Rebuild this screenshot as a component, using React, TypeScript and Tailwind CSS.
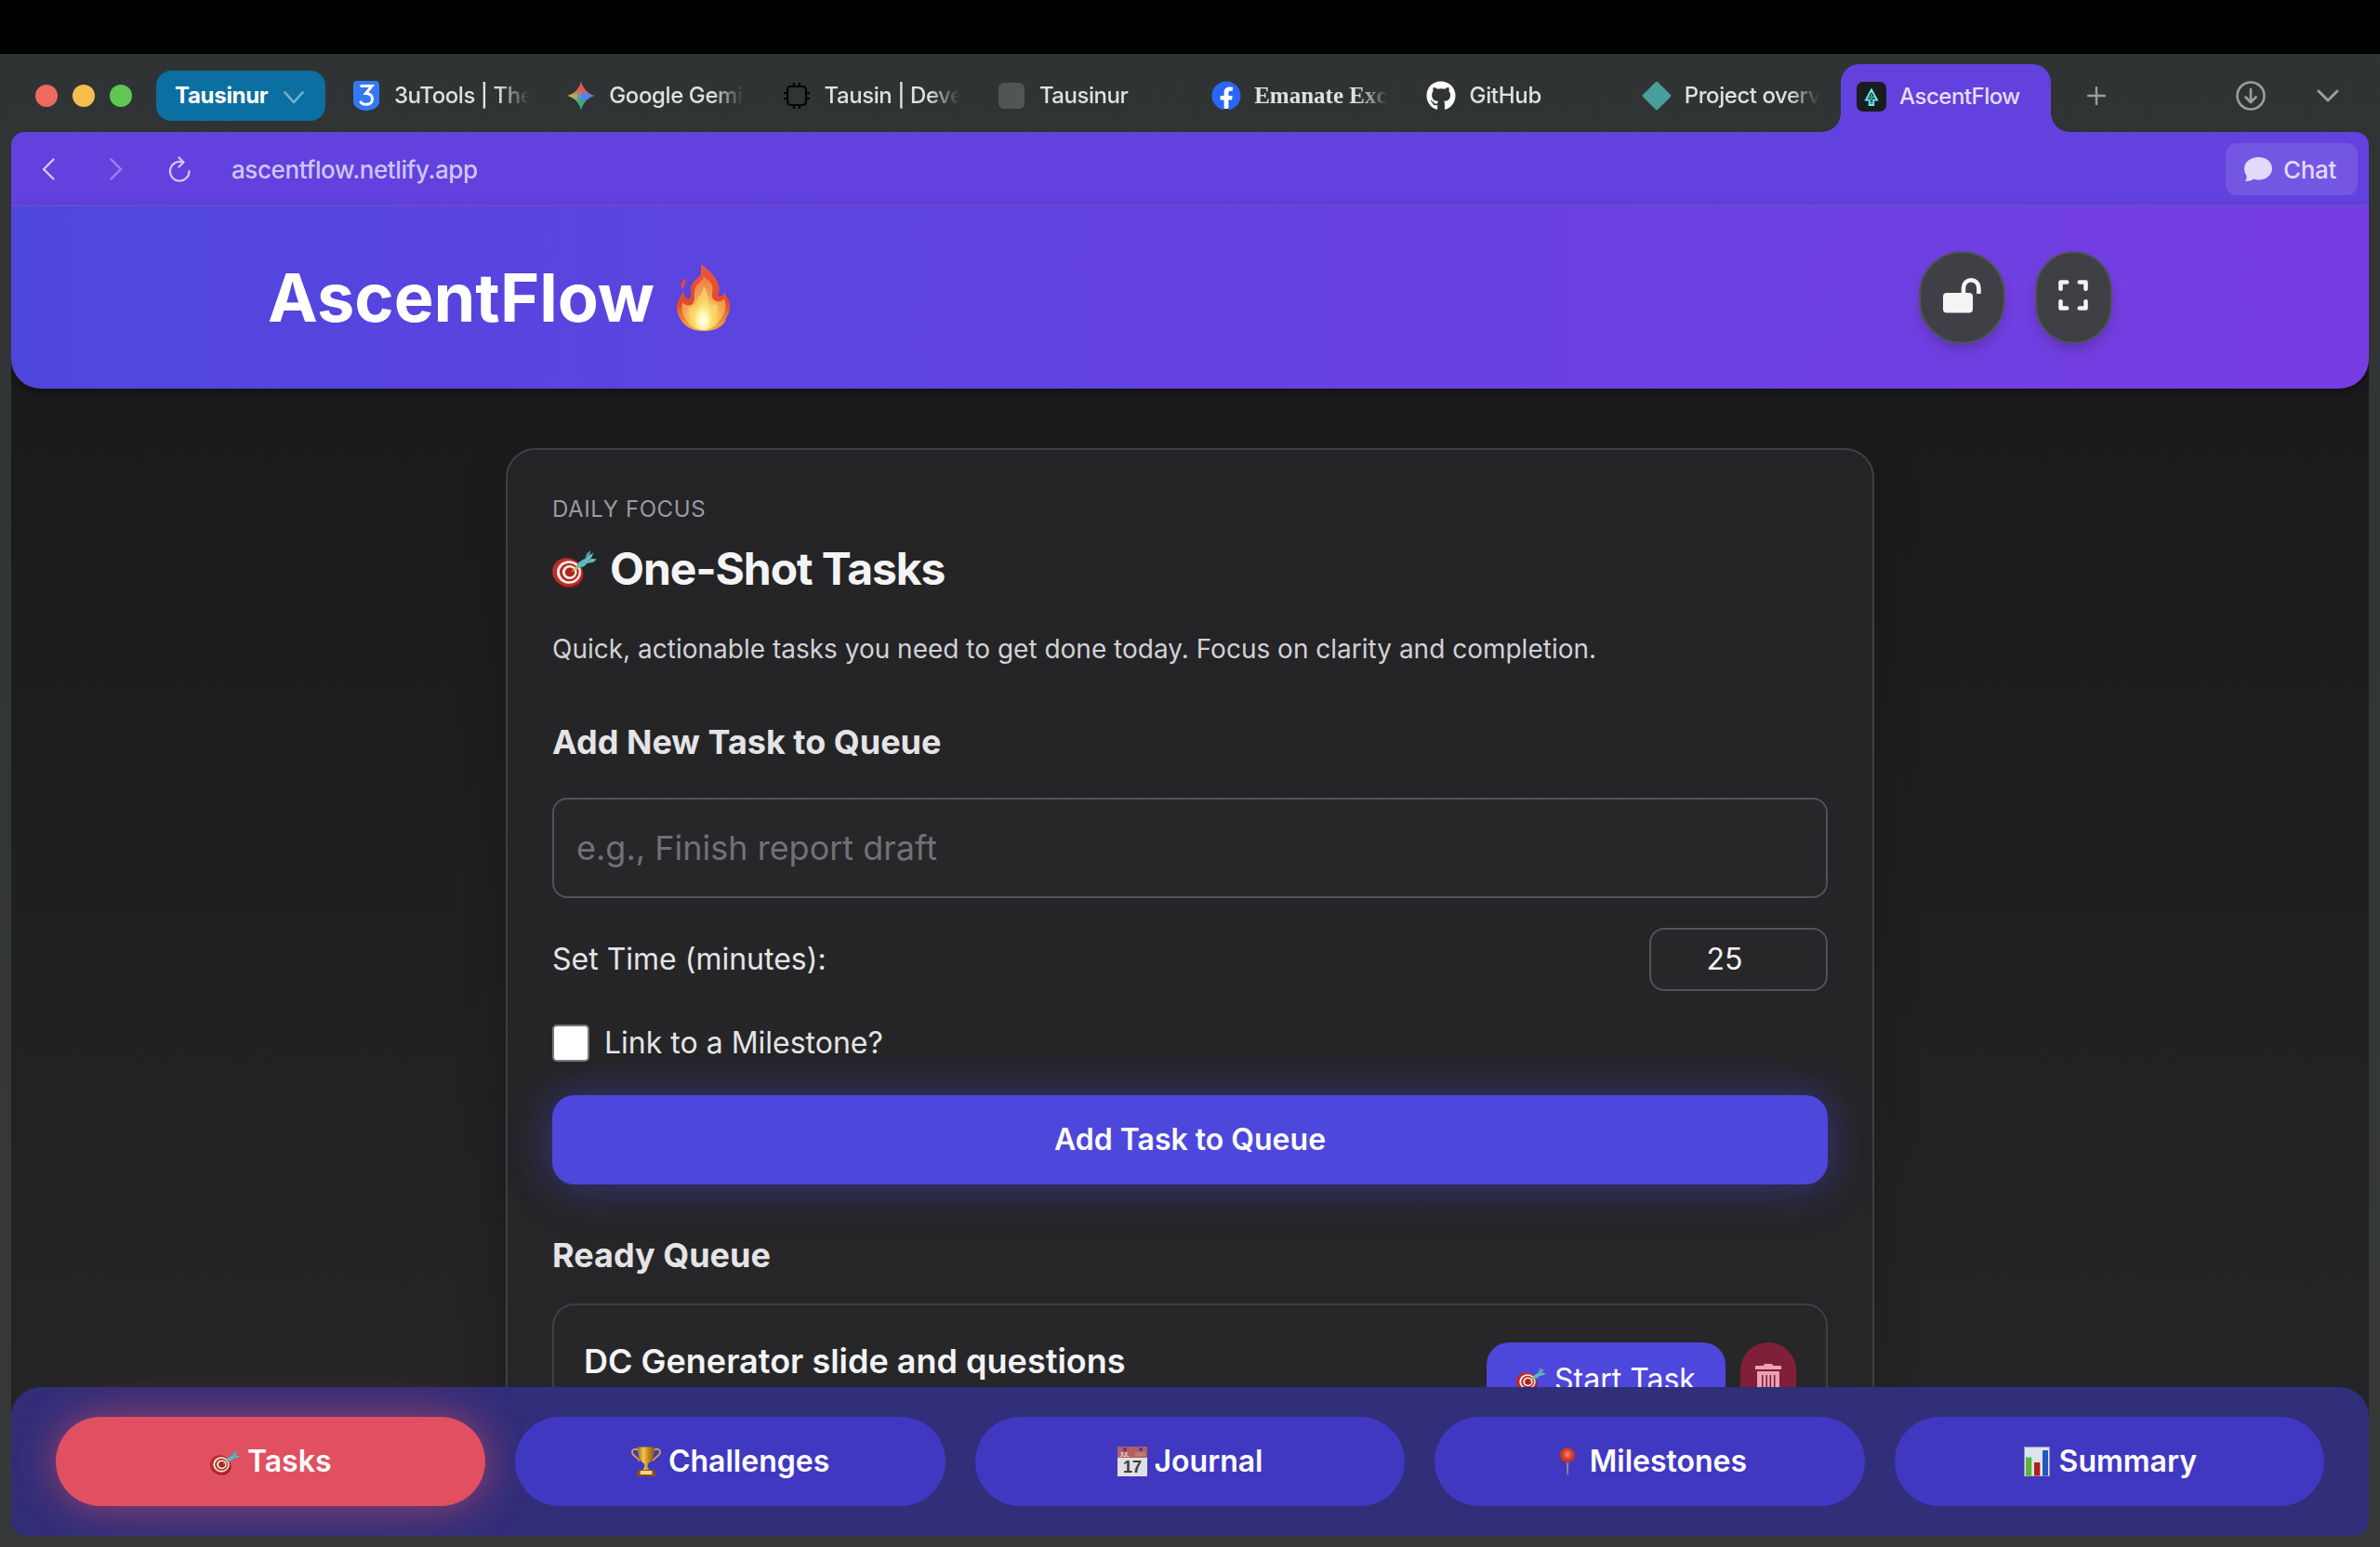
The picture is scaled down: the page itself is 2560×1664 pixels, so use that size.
import React from "react";
import { FaFacebook, FaGithub } from "react-icons/fa";

type IconProps = { className?: string };

function TargetIcon({ className }: IconProps) {
  return (
    <svg viewBox="0 0 48 40" className={className}>
      <ellipse cx="17" cy="25" rx="17" ry="15" transform="rotate(22 17 25)" fill="#7d1a1a" />
      <ellipse cx="16.5" cy="23.5" rx="16.5" ry="15" transform="rotate(22 16.5 23.5)" fill="#c02c28" />
      <ellipse cx="18" cy="23.5" rx="13" ry="12.200" fill="#f7efee" />
      <ellipse cx="18.3" cy="23.500" rx="10.400" ry="9.800" fill="#b82a26" />
      <ellipse cx="18.7" cy="23.500" rx="7.8" ry="7.4" fill="#f7efee" />
      <ellipse cx="19" cy="23.500" rx="5.2" ry="5" fill="#a92521" />
      <path d="M20.5 23.5 26 16l3 3Z" fill="#e3b53c" />
      <path d="M25.5 18.5c1-4.500 5-7.500 9.500-9.500l3.500 3.500c-2.500 4-6.500 7-13 6Z" fill="#5fb6c0" />
      <path d="M34.500 11 37 3.500 41 0l-.5 5L45 2l-3.500 6.500L48 9.500l-4 3.500-7.500 1Z" fill="#4b9fac" />
      <path d="m35 12 8-7M36.500 13l9-3" stroke="#8fd3da" strokeWidth="1.200" fill="none" />
    </svg>
  );
}

function FlameIcon({ className }: IconProps) {
  return (
    <svg viewBox="0 0 57 72" className={className}>
      <defs>
        <linearGradient id="flameOuter" x1="0" y1="0" x2="0" y2="1">
          <stop offset="0" stopColor="#ea5640" />
          <stop offset=".6" stopColor="#e34a26" />
          <stop offset="1" stopColor="#f2b043" />
        </linearGradient>
        <radialGradient id="flameMid" cx=".5" cy=".85" r=".85">
          <stop offset="0" stopColor="#fdf39a" />
          <stop offset=".3" stopColor="#f9d463" />
          <stop offset=".6" stopColor="#f2a052" />
          <stop offset="1" stopColor="#ec7a48" />
        </radialGradient>
        <radialGradient id="flameCore" cx=".5" cy=".72" r=".6">
          <stop offset="0" stopColor="#fffff4" />
          <stop offset=".45" stopColor="#fef7ae" />
          <stop offset="1" stopColor="#fae06c" stopOpacity=".4" />
        </radialGradient>
      </defs>
      <path d="M26 0C33 6 41 12 44 20c3 5 1 10 .5 14 2 1.500 6.500 0 7-5 .3 5 5.500 9 5.500 16 0 6-1.500 10-4 13l-1 4c-4 6-11 10-23.500 10C16 72 9 67 5 61L2.500 57C0 52-.5 47 .5 42 2 37 5 34 7 29c.5 4 2 8 5.500 9 4 0 2-8 3-14 1-7 10-8 10.500-15Z" fill="url(#flameOuter)" />
      <path d="M9.500 15c1 5-2 7-3 13C4 24 3.500 20 9.500 15Z" fill="#e8492c" />
      <path d="M29 13c4 5 8.500 6 9.500 12 .5 5-2 9 .5 12.500 4 4 9 3 12 0 2.500 6 2 13-1.500 18C45 64 38 71 28.500 71S12 65 8 57c-3-5-3-11-2-15.500 4 3.500 9 4 11.500 1 3-5 0-12 3-18C23 20 28 19 29 13Z" fill="url(#flameMid)" />
      <path d="M29 24c4 6 5 13 6 19 3 2 6 1 8-.5 1 8-1 16-4 21-3 4.500-6 7-10.500 7-5 0-9-3-12-8-3-6-4-11-3-16 3 1 6 0 7-2.500 1-7 7-11 8.500-20Z" fill="#fbd867" opacity=".75" />
      <path d="M29 36c3 5 8 13 9 19 1 8-3 15-9.500 15.500C21 71 18 63 18.500 56 20 49 27 45 29 36Z" fill="url(#flameCore)" />
    </svg>
  );
}

function TrophyIcon({ className }: IconProps) {
  return (
    <svg viewBox="0 0 32 32" className={className}>
      <defs>
        <linearGradient id="gold" x1="0" x2="1">
          <stop offset="0" stopColor="#a8701a" />
          <stop offset=".35" stopColor="#f3c64b" />
          <stop offset=".6" stopColor="#c98c22" />
          <stop offset="1" stopColor="#8c5a12" />
        </linearGradient>
      </defs>
      <path d="M8 4C4 1.500.5 3 1 6.500c.5 4 5 4 8 9M24 4c4-2.500 7.500-1 7 2.500-.5 4-5 4-8 9" fill="none" stroke="#d6a33a" strokeWidth="1.800" />
      <path d="M7 .5h18c.3 9-2 15-6.500 17.500-1.500 1-1 5 1.500 7.500h-8c2.500-2.500 3-6.500 1.500-7.500C9 15.500 6.700 9.500 7 .5Z" fill="url(#gold)" />
      <path d="M7 25h18l1 7H6Z" fill="#8e4f16" />
      <path d="M10 26h12l.6 4H9.400Z" fill="#f2d98a" />
    </svg>
  );
}

function CalendarIcon({ className }: IconProps) {
  return (
    <svg viewBox="0 0 32 32" className={className}>
      <rect width="32" height="32" fill="#dfe0e4" />
      <rect width="32" height="12" fill="#b2605c" />
      <circle cx="8" cy="3" r="2" fill="#4138c2" />
      <circle cx="25" cy="3" r="2" fill="#4138c2" />
      <text x="2" y="10.500" fontSize="6.500" fill="#e6c8c8" fontFamily="Liberation Sans" textLength="11">JUL</text>
      <rect x="19" y="6" width="11" height="4.500" fill="#bd7b78" />
      <text x="16" y="28" fontSize="18" fill="#3c3c40" textAnchor="middle" fontFamily="Liberation Sans">17</text>
    </svg>
  );
}

function PinIcon({ className }: IconProps) {
  return (
    <svg viewBox="0 0 32 32" className={className}>
      <defs>
        <radialGradient id="pinHead" cx=".5" cy=".45" r=".6">
          <stop offset="0" stopColor="#ef8f80" />
          <stop offset=".5" stopColor="#d6402f" />
          <stop offset="1" stopColor="#a32b22" />
        </radialGradient>
      </defs>
      <path d="M14.800 16h2.600l-.6 14.500h-1.400Z" fill="#8c8793" />
      <circle cx="16" cy="9.200" r="8.200" fill="url(#pinHead)" />
    </svg>
  );
}

function ChartIcon({ className }: IconProps) {
  return (
    <svg viewBox="0 0 32 32" className={className}>
      <rect x="2" width="28" height="32" fill="#8f96c4" />
      <rect x="3" y="1" width="26" height="30.500" fill="#dde4ee" />
      <rect x="4" y="11.500" width="6.300" height="20" fill="#55b63c" />
      <rect x="13" y="17" width="6.300" height="14.500" fill="#ad231b" />
      <rect x="22" y="4" width="6" height="27.500" fill="#2459b8" />
    </svg>
  );
}

function Unlock() {
  return (
    <svg viewBox="0 0 41 38" className="h-[38px] w-[41px]">
      <rect x="0" y="16" width="32" height="21.500" rx="4" fill="#f4f4f5" />
      <path d="M22 18V10.500a8.200 8.200 0 0 1 16.400 0V17" fill="none" stroke="#f4f4f5" strokeWidth="4.600" strokeLinecap="butt" />
    </svg>
  );
}

function Fullscreen() {
  return (
    <svg viewBox="0 0 32 33" className="h-[33px] w-8">
      <path
        d="M9.200 2.500H2.500V9.800M22.800 2.500h6.700V9.800M9.200 30.500H2.500V23.200M22.800 30.500h6.700V23.200"
        fill="none"
        stroke="#f4f4f5"
        strokeWidth="4.600"
        strokeLinecap="round"
        strokeLinejoin="round"
      />
    </svg>
  );
}

function TrashIcon() {
  return (
    <svg viewBox="0 0 28 34" className="h-[34px] w-7 shrink-0">
      <path fill="#eda3b0" fillRule="evenodd" d="M8.500 2 10 0h8l1.500 2H27a1 1 0 0 1 1 1v3H0V3a1 1 0 0 1 1-1ZM2 8h24v23a3 3 0 0 1-3 3H5a3 3 0 0 1-3-3Zm5 4v18h1.600V12Zm4.400 0v18H13V12Zm4.100 0v18h1.600V12Zm4.400 0v18h1.600V12Z" />
    </svg>
  );
}

function ShieldThree() {
  return (
    <svg viewBox="0 0 28 32" className="h-8 w-7">
      <path d="M4 0h20a4 4 0 0 1 4 4v19c0 5-8 9-14 9S0 28 0 23V4a4 4 0 0 1 4-4Z" fill="#3478f6" />
      <path d="M7.500 5.500H20l-6.500 8c4.500 0 7 2.500 7 6 0 3.700-3 5.800-6.500 5.800-3.200 0-5.500-1.300-6.500-3.500" fill="none" stroke="#fff" strokeWidth="3" />
    </svg>
  );
}

function GeminiSpark() {
  return (
    <svg viewBox="0 0 30 30" className="h-[30px] w-[30px]">
      <defs>
        <linearGradient id="gemBase" x1="0" y1=".4" x2="1" y2=".6">
          <stop offset="0" stopColor="#f6c12b" />
          <stop offset=".35" stopColor="#8fae6a" />
          <stop offset=".55" stopColor="#4a83ee" />
          <stop offset="1" stopColor="#4a86f0" />
        </linearGradient>
        <linearGradient id="gemTop" x1="0" y1="0" x2="0" y2="1">
          <stop offset="0" stopColor="#ee4a3c" />
          <stop offset=".3" stopColor="#e5604f" />
          <stop offset=".5" stopColor="#e5604f" stopOpacity="0" />
        </linearGradient>
        <linearGradient id="gemBottom" x1="0" y1="1" x2="0" y2="0">
          <stop offset="0" stopColor="#2fb457" />
          <stop offset=".22" stopColor="#3bb065" />
          <stop offset=".42" stopColor="#3bb065" stopOpacity="0" />
        </linearGradient>
      </defs>
      {["url(#gemBase)", "url(#gemTop)", "url(#gemBottom)"].map((fill) => (
        <path key={fill} d="M15 0c1.800 7.500 7.500 13.200 15 15-7.500 1.800-13.200 7.500-15 15C13.200 22.500 7.500 16.800 0 15 7.500 13.200 13.200 7.500 15 0Z" fill={fill} />
      ))}
    </svg>
  );
}

function ChipIcon() {
  return (
    <svg viewBox="0 0 28 28" className="h-7 w-7" fill="none" stroke="#050505" strokeWidth="2.200">
      <rect x="4" y="4" width="20" height="20" rx="3.500" />
      <path d="M11 0v4M17 0v4M11 24v4M17 24v4M0 11h4M0 17h4M24 11h4M24 17h4" />
    </svg>
  );
}

function AscentLogo() {
  return (
    <svg viewBox="0 0 32 32" className="h-8 w-8">
      <rect width="32" height="32" rx="7" fill="#1b1c1f" />
      <path d="M16 8.500 10 19.500h3.800V25h4.400v-5.500H22Z" fill="none" stroke="#5ff0ee" strokeWidth="1.900" />
      <path d="M16 9v16M12.500 16.500h7" stroke="#5ff0ee" strokeWidth="1.200" strokeDasharray="3 1" />
    </svg>
  );
}

const tabs = [
  { label: "3uTools | The", icon: <ShieldThree />, text: "tracking-[-0.45px]" },
  { label: "Google Gemi", icon: <GeminiSpark />, text: "tracking-[-0.4px]" },
  { label: "Tausin | Deve", icon: <ChipIcon />, text: "tracking-[-0.45px]" },
  { label: "Tausinur", icon: <span className="h-7 w-7 rounded-md bg-[#515555]" />, text: "tracking-[-0.45px]" },
  {
    label: "Emanate Exc",
    icon: (
      <span className="flex h-8 w-8 items-center justify-center rounded-full bg-[radial-gradient(circle,#fff_60%,transparent_61%)]">
        <FaFacebook className="h-8 w-8 text-[#2a66f5]" />
      </span>
    ),
    text: "font-['Liberation_Serif',serif] text-[25px] font-bold",
  },
  { label: "GitHub", icon: <FaGithub className="h-8 w-8 text-white" />, text: "tracking-[-0.3px]" },
  {
    label: "Project overv",
    icon: (
      <svg viewBox="0 0 32 32" className="h-8 w-8">
        <path d="M14.500 1.500a2 2 0 0 1 3 0L30.500 14.500a2 2 0 0 1 0 3L17.500 30.500a2 2 0 0 1-3 0L1.500 17.500a2 2 0 0 1 0-3Z" fill="#4a9e9c" />
      </svg>
    ),
    text: "tracking-[-0.45px]",
  },
];

function TabBar() {
  return (
    <div className="flex h-[84px] shrink-0 items-center pt-[6px]">
      <div className="ml-[38px] flex w-[130px] gap-4">
        <span className="h-6 w-6 rounded-full bg-[#ed6a5f]" />
        <span className="h-6 w-6 rounded-full bg-[#f5bf4f]" />
        <span className="h-6 w-6 rounded-full bg-[#62c654]" />
      </div>
      <div className="flex h-[54px] w-[182px] items-center rounded-2xl bg-[#0b6fa1] pl-5">
        <span className="text-2xl font-bold tracking-[-0.3px] text-white">Tausinur</span>
        <svg viewBox="0 0 22 14" className="mt-1 ml-[17px] h-3.5 w-[22px]" fill="none" stroke="#79b1cc" strokeWidth="2.600" strokeLinecap="round" strokeLinejoin="round">
          <path d="m1.500 1.500 9.500 10.500 9.500-10.500" />
        </svg>
      </div>
      <div className="ml-7 flex">
        {tabs.map((t, i) => (
          <div key={i} className="flex w-[231.300px] items-center">
            <span className="flex h-8 w-8 shrink-0 items-center justify-center">{t.icon}</span>
            <span className="ml-[14px] flex h-9 w-[170px] shrink-0 items-center overflow-hidden text-2xl font-[450] whitespace-nowrap text-[#dfe0e0] [mask-image:linear-gradient(to_right,#000_112px,transparent_145px)]">
              <span className={t.text}>{t.label}</span>
            </span>
          </div>
        ))}
      </div>
      <div className="relative ml-[-17px] flex h-[73px] w-[226px] shrink-0 items-center self-end rounded-t-[20px] bg-[#6241de] pb-1 pl-[17px]">
        <span className="absolute bottom-0 -left-5 h-5 w-5 bg-[radial-gradient(circle_at_0_0,transparent_19.500px,#6241de_20px)]" />
        <span className="absolute -right-5 bottom-0 h-5 w-5 bg-[radial-gradient(circle_at_100%_0,transparent_19.500px,#6241de_20px)]" />
        <AscentLogo />
        <span className="ml-[14px] text-2xl font-[450] tracking-[-0.5px] text-[#e4defa]">AscentFlow</span>
      </div>
      <svg viewBox="0 0 20 20" className="ml-[39px] h-5 w-5" stroke="#9c9d9e" strokeWidth="2.400" strokeLinecap="round">
        <path d="M10 1v18M1 10h18" />
      </svg>
      <svg viewBox="0 0 32 32" className="ml-auto h-8 w-8" fill="none" stroke="#9c9d9e" strokeWidth="2.600" strokeLinecap="round" strokeLinejoin="round">
        <circle cx="16" cy="16" r="14.500" />
        <path d="M16 9v13.500M10.500 17.500l5.500 5.500 5.500-5.500" />
      </svg>
      <svg viewBox="0 0 24 14" className="mr-[44px] ml-[55px] h-3.5 w-6" fill="none" stroke="#9c9d9e" strokeWidth="3" strokeLinecap="round" strokeLinejoin="round">
        <path d="m2 2 10 10L22 2" />
      </svg>
    </div>
  );
}

function Toolbar() {
  return (
    <div className="flex h-20 shrink-0 items-center border-b-2 border-[#6f50e0] bg-[#6241de] pt-0.5 pr-3">
      <svg viewBox="0 0 14 24" className="ml-[33px] h-6 w-3.5" fill="none" stroke="#d3c9f6" strokeWidth="2.400" strokeLinecap="round" strokeLinejoin="round">
        <path d="M12.500 1.500 2 12l10.500 10.500" />
      </svg>
      <svg viewBox="0 0 14 24" className="ml-[59px] h-6 w-3.5" fill="none" stroke="#9a85ea" strokeWidth="2.400" strokeLinecap="round" strokeLinejoin="round">
        <path d="M1.500 1.500 12 12 1.500 22.500" />
      </svg>
      <svg viewBox="0 0 24 28" className="ml-[49px] h-7 w-6" fill="none" stroke="#d3c9f6" strokeWidth="2.200" strokeLinecap="round" strokeLinejoin="round">
        <path d="M15.500 6.500A10.300 10.300 0 1 0 22.500 16M11.500 1.500l5 5-5 5" />
      </svg>
      <span className="ml-[44px] text-[26px] font-[450] tracking-[-0.4px] text-[#cfc5f6]">ascentflow.netlify.app</span>
      <div className="ml-auto flex h-14 w-[142px] items-center rounded-xl bg-[#7357e2] pl-5">
        <svg viewBox="0 0 30 26" className="h-[26px] w-[30px]">
          <path d="M15.500 0C23.500 0 30 5.400 30 12.200S23.500 24.400 15.500 24.400c-2 0-3.900-.3-5.600-.9C8 25 4.500 26.200.8 25.800c1.600-1.500 2-3.500 1.500-6C.9 17.600 0 15 0 12.200 0 5.400 7 0 15.500 0Z" fill="#e1dafa" />
        </svg>
        <span className="ml-3 text-[26px] font-[450] tracking-[-0.3px] text-[#e1dafa]">Chat</span>
      </div>
    </div>
  );
}

function Header() {
  return (
    <header className="relative flex h-[196px] shrink-0 justify-center rounded-b-[32px] bg-linear-to-r from-[#4f46dd] to-[#773de3] shadow-[0_4px_12px_rgba(0,0,0,0.35)]">
      <div className="flex w-[1984px] items-center justify-between">
        <h1 className="flex items-center">
          <span className="text-[72px] leading-none font-bold text-white">AscentFlow</span>
          <FlameIcon className="ml-6 h-[72px] w-[57px]" />
        </h1>
        <div className="flex gap-8">
          <button className="flex h-[100px] w-[93px] items-center justify-center rounded-full border-2 border-[#52525b] bg-[#3f3f46] pr-px pb-[5px] shadow-[0_8px_16px_-4px_rgba(0,0,0,0.25)]">
            <Unlock />
          </button>
          <button className="flex h-[100px] w-[83px] items-center justify-center rounded-full border-2 border-[#52525b] bg-[#3f3f46] pr-px pb-[5px] shadow-[0_8px_16px_-4px_rgba(0,0,0,0.25)]">
            <Fullscreen />
          </button>
        </div>
      </div>
    </header>
  );
}

function TaskCard() {
  return (
    <section className="h-[1300px] w-[1472px] shrink-0 rounded-[32px] border-2 border-[#3f3f45] bg-linear-to-b from-[#242426] to-[#272729] p-12 shadow-[0_20px_50px_rgba(0,0,0,0.2)]">
      <p className="h-[31px] text-2xl leading-[31px] tracking-[0.6px] text-[#9b9aa3]">DAILY FOCUS</p>
      <h2 className="mt-[17px] flex h-16 items-center text-[48px] leading-[64px] font-bold text-[#f4f4f5]">
        <TargetIcon className="h-10 w-12" />
        <span className="ml-[14px] tracking-[-1.100px]">One-Shot Tasks</span>
      </h2>
      <p className="mt-8 text-[28px] leading-[44px] text-[#d2d2d6]">
        Quick, actionable tasks you need to get done today. Focus on clarity and completion.
      </p>
      <h3 className="mt-[50px] text-[36px] leading-[56px] font-bold text-[#e4e4e7]">Add New Task to Queue</h3>
      <div className="mt-8 flex h-[108px] items-center rounded-2xl border-2 border-[#52525b] bg-[#272729] px-6 text-[36px] text-[#71717a]">
        e.g., Finish report draft
      </div>
      <div className="mt-8 flex h-[68px] items-center justify-between text-[32px]">
        <span className="text-[#e4e4e7]">Set Time (minutes):</span>
        <div className="flex h-[68px] w-48 items-center justify-center rounded-2xl border-2 border-[#52525b] bg-[#272729] pr-[30px] text-[#f4f4f5] shadow-sm">
          25
        </div>
      </div>
      <div className="mt-9 flex h-10 items-center text-[32px] text-[#e4e4e7]">
        <span className="h-10 w-10 rounded-[5px] border-2 border-[#767676] bg-white" />
        <span className="ml-4">Link to a Milestone?</span>
      </div>
      <button className="mt-9 flex h-24 w-full items-center justify-center rounded-3xl bg-[#4d47db] text-[32px] font-semibold text-white shadow-[0_0_40px_rgba(79,70,229,0.4),0_8px_60px_rgba(79,70,229,0.12)]">
        Add Task to Queue
      </button>
      <h3 className="mt-12 text-[36px] leading-[56px] font-bold text-[#e4e4e7]">Ready Queue</h3>
      <div className="mt-6 flex h-[260px] items-start justify-between rounded-3xl border-2 border-[#3f3f45] bg-[#272729] px-8 pt-10">
        <span className="text-[36px] leading-10 font-semibold text-[#f4f4f5]">DC Generator slide and questions</span>
        <div className="flex gap-4">
          <div className="flex h-20 w-[257px] items-center rounded-3xl bg-[#4d47db] pl-8 text-[32px] text-white">
            <TargetIcon className="h-7 w-8" />
            <span className="ml-[9px]">Start Task</span>
          </div>
          <div className="flex h-20 w-[60px] items-center justify-center rounded-full bg-[#7f1f38]">
            <TrashIcon />
          </div>
        </div>
      </div>
    </section>
  );
}

const navItems = [
  { label: "Tasks", Icon: TargetIcon, size: "mt-0.5 h-7 w-8" },
  { label: "Challenges", Icon: TrophyIcon, size: "h-8 w-8" },
  { label: "Journal", Icon: CalendarIcon, size: "h-8 w-8" },
  { label: "Milestones", Icon: PinIcon, size: "h-8 w-8" },
  { label: "Summary", Icon: ChartIcon, size: "h-8 w-8" },
];

function BottomNav() {
  return (
    <nav className="relative grid h-40 shrink-0 grid-cols-5 gap-8 rounded-t-[32px] rounded-b-2xl bg-[#312e7a] p-8 px-12">
      {navItems.map(({ label, Icon, size }, i) => (
        <button
          key={label}
          className={
            i === 0
              ? "flex h-24 items-center justify-center gap-2 rounded-full bg-[#e05061] text-[32px] font-semibold text-white shadow-[0_0_40px_rgba(224,80,97,0.55),0_0_90px_rgba(224,80,97,0.12)]"
              : "flex h-24 items-center justify-center gap-2 rounded-full bg-[#4138c2] text-[32px] font-semibold text-white"
          }
        >
          <Icon className={size} />
          <span>{label}</span>
        </button>
      ))}
    </nav>
  );
}

export default function App() {
  return (
    <div className="flex h-[1664px] w-[2560px] flex-col overflow-hidden bg-linear-to-b from-[#303334] to-[#363938] pt-[58px] font-['Inter',sans-serif] shadow-[inset_0_58px_0_#000]">
      <TabBar />
      <div className="mx-3 flex h-[1510px] shrink-0 flex-col overflow-hidden rounded-t-[14px] rounded-b-2xl bg-linear-to-b from-[#18181a] to-[#262628]">
        <Toolbar />
        <Header />
        <main className="flex min-h-0 flex-1 flex-col items-center pt-16">
          <TaskCard />
        </main>
        <BottomNav />
      </div>
    </div>
  );
}
